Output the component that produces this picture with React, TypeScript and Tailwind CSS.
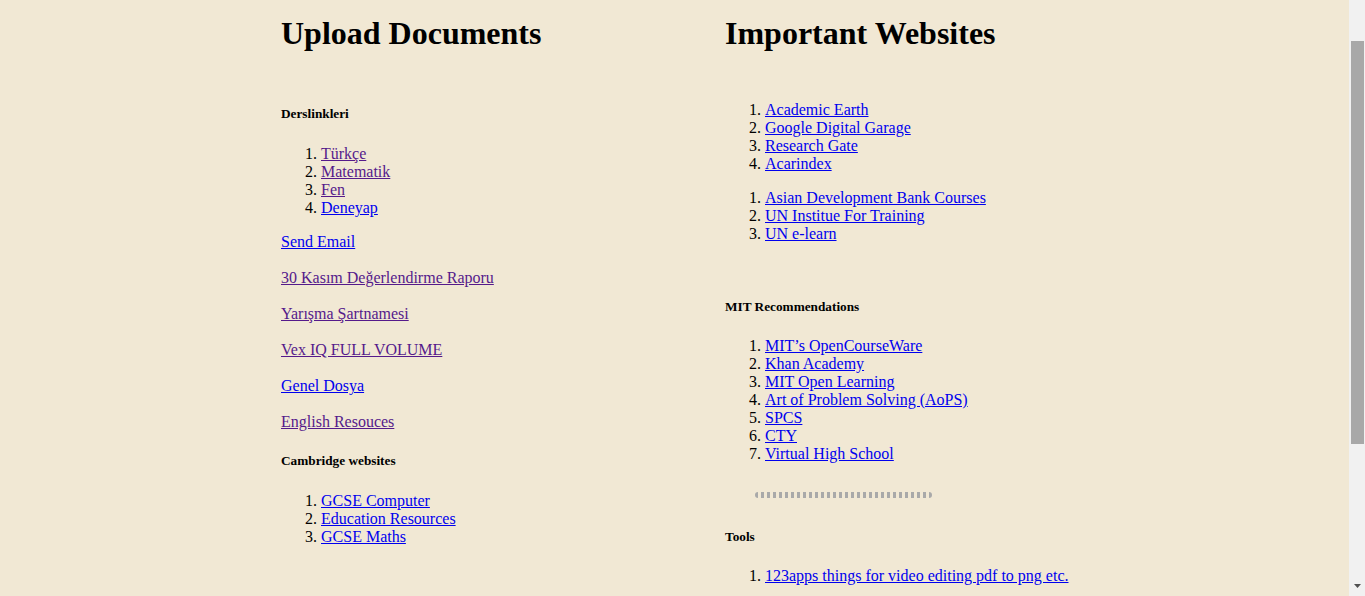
type Item = { label: string; visited?: boolean };

function Link({ item }: { item: Item }) {
  return (
    <a href="#" className={`underline ${item.visited ? "text-[#551a8b]" : "text-[#0000ee]"}`}>
      {item.label}
    </a>
  );
}

function List({ items, className = "" }: { items: Item[]; className?: string }) {
  return (
    <ol className={`list-decimal pl-10 ${className}`}>
      {items.map((it, i) => (
        <li key={i} className="leading-[18px]">
          <Link item={it} />
        </li>
      ))}
    </ol>
  );
}

function SubHead({ children, className = "" }: { children: React.ReactNode; className?: string }) {
  return <h5 className={`text-[13.28px] font-bold leading-[15px] ${className}`}>{children}</h5>;
}

const ders: Item[] = [
  { label: "Türkçe", visited: true },
  { label: "Matematik", visited: true },
  { label: "Fen", visited: true },
  { label: "Deneyap" },
];

const docs: Item[] = [
  { label: "Send Email" },
  { label: "30 Kasım Değerlendirme Raporu", visited: true },
  { label: "Yarışma Şartnamesi", visited: true },
  { label: "Vex IQ FULL VOLUME", visited: true },
  { label: "Genel Dosya" },
  { label: "English Resouces", visited: true },
];

const cambridge: Item[] = [{ label: "GCSE Computer" }, { label: "Education Resources" }, { label: "GCSE Maths" }];

const sites: Item[] = [
  { label: "Academic Earth" },
  { label: "Google Digital Garage" },
  { label: "Research Gate" },
  { label: "Acarindex" },
];

const courses: Item[] = [
  { label: "Asian Development Bank Courses" },
  { label: "UN Institue For Training" },
  { label: "UN e-learn" },
];

const mit: Item[] = [
  { label: "MIT’s OpenCourseWare" },
  { label: "Khan Academy" },
  { label: "MIT Open Learning" },
  { label: "Art of Problem Solving (AoPS)" },
  { label: "SPCS" },
  { label: "CTY" },
  { label: "Virtual High School" },
];

const tools: Item[] = [{ label: "123apps things for video editing pdf to png etc." }];

export default function App() {
  return (
    <div className="flex h-[596px] overflow-hidden bg-[#f1e8d4] font-['Liberation_Serif',serif] text-[16px] text-black">
      <main className="flex flex-1 pl-[281px] pt-[15px]">
        <section className="w-[444px]">
          <h1 className="text-[32px] font-bold leading-[37px]">Upload Documents</h1>
          <SubHead className="mt-[54px]">Derslinkleri</SubHead>
          <List items={ders} className="mt-[24px]" />
          <div className="mt-4 flex flex-col gap-[18px]">
            {docs.map((d, i) => (
              <p key={i} className="leading-[18px]">
                <Link item={d} />
              </p>
            ))}
          </div>
          <SubHead className="mt-[22px]">Cambridge websites</SubHead>
          <List items={cambridge} className="mt-[24px]" />
        </section>

        <section className="w-[444px]">
          <h1 className="text-[32px] font-bold leading-[37px]">Important Websites</h1>
          <List items={sites} className="mt-[49px]" />
          <List items={courses} className="mt-4" />
          <SubHead className="mt-[56px]">MIT Recommendations</SubHead>
          <List items={mit} className="mt-[23px]" />
          <div className="ml-[30px] mt-[29px] flex gap-[3px]">
            {Array.from({ length: 30 }).map((_, i) => (
              <span
                key={i}
                className={`h-[6px] w-[3px] bg-[#a9a9a9] ${i === 0 ? "rounded-l-full" : ""} ${i === 29 ? "rounded-r-full" : ""}`}
              />
            ))}
          </div>
          <SubHead className="mt-[31px]">Tools</SubHead>
          <List items={tools} className="mt-[23px]" />
        </section>
      </main>

      <div className="flex w-4 flex-col bg-[#f1f1f1]">
        <div className="ml-[2px] mr-px mt-[41px] h-[403px] bg-[#a8a8a8]" />
        <div className="mb-[8px] mt-auto flex justify-center">
          <svg width="7" height="4" viewBox="0 0 7 4">
            <path d="M0 0h7L3.5 4z" fill="#505050" />
          </svg>
        </div>
      </div>
    </div>
  );
}
